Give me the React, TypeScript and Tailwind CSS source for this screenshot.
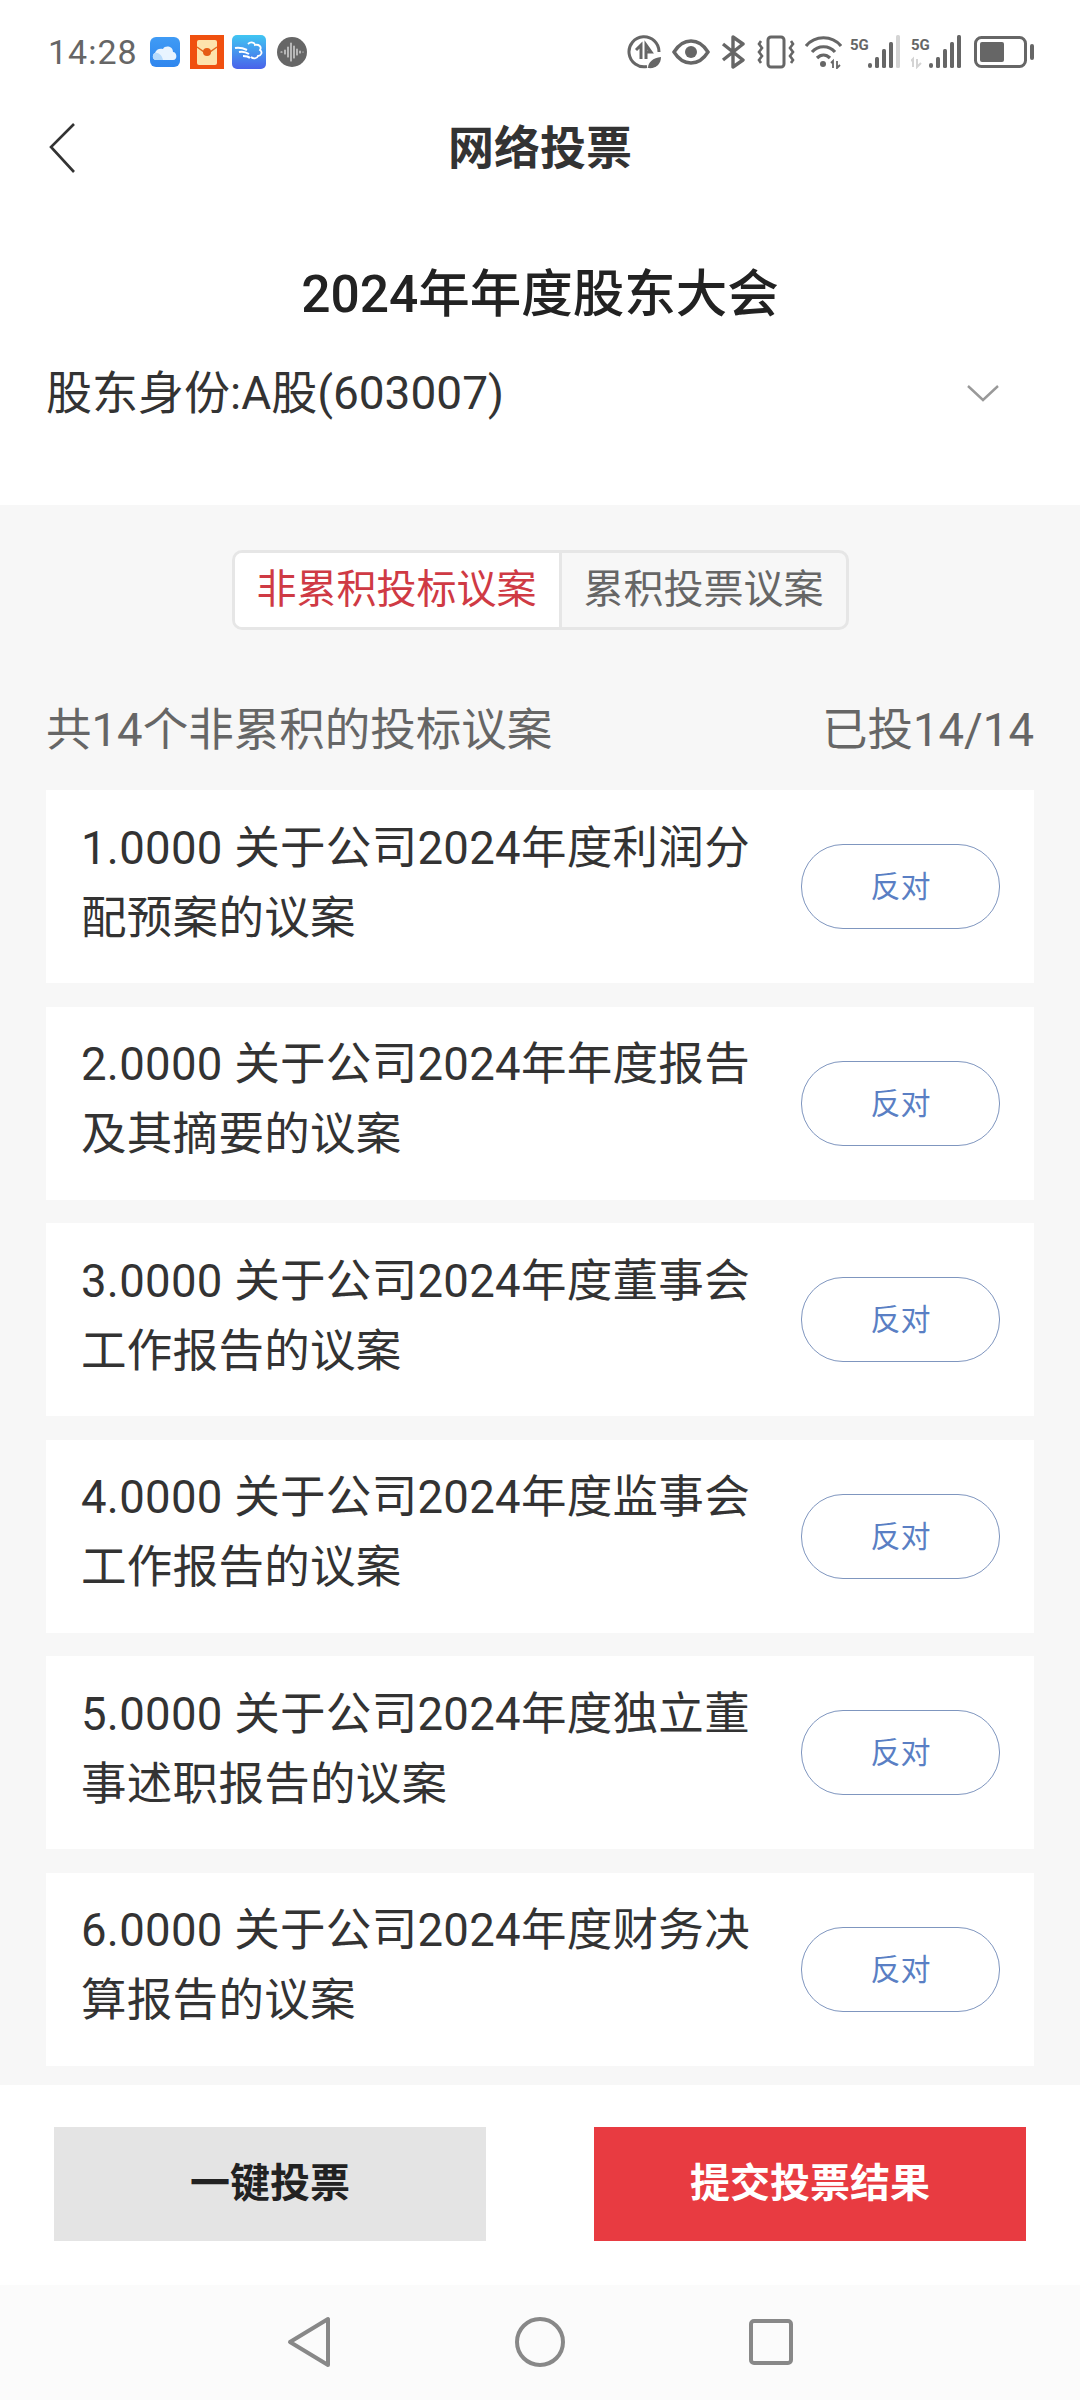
import * as React from 'react';

const proposals = [
  ['1.0000 关于公司2024年度利润分', '配预案的议案'],
  ['2.0000 关于公司2024年年度报告', '及其摘要的议案'],
  ['3.0000 关于公司2024年度董事会', '工作报告的议案'],
  ['4.0000 关于公司2024年度监事会', '工作报告的议案'],
  ['5.0000 关于公司2024年度独立董', '事述职报告的议案'],
  ['6.0000 关于公司2024年度财务决', '算报告的议案'],
];

function NotificationIcons() {
  return (
    <div className="ml-[12px] flex items-center">
      {/* cloud */}
      <svg width="30" height="30" viewBox="0 0 30 30">
        <defs>
          <linearGradient id="cloudBg" x1="0" y1="0" x2="0" y2="1">
            <stop offset="0" stopColor="#3f9bf5" />
            <stop offset="1" stopColor="#2f86ee" />
          </linearGradient>
        </defs>
        <rect width="30" height="30" rx="6" fill="url(#cloudBg)" />
        <path d="M6 23c-4 0-4-6-1-7 1-4 5-5 8-4 2-4 10-3 10 3 4 0 5 8 0 8z" fill="#e8f4ff" />
        <path d="M6 23c-4 0-4-6-1-7 3-1 7 2 8 7z" fill="#b5dafc" />
      </svg>
      {/* red packet */}
      <svg width="34" height="34" viewBox="0 0 34 34" className="ml-[10px]">
        <rect width="34" height="34" fill="#f0500f" />
        <rect x="7" y="5" width="20" height="25" rx="2" fill="#fde3ac" />
        <path d="M7 12l10 7 10-7" fill="none" stroke="#e0691f" strokeWidth="1.5" />
        <circle cx="17" cy="17" r="4" fill="#e55b14" />
      </svg>
      {/* flying cloud */}
      <svg width="34" height="34" viewBox="0 0 34 34" className="ml-[8px]">
        <defs>
          <linearGradient id="flyBg" x1="0" y1="0" x2="0" y2="1">
            <stop offset="0" stopColor="#40c6f2" />
            <stop offset="1" stopColor="#4a62ea" />
          </linearGradient>
        </defs>
        <rect width="34" height="34" rx="5" fill="url(#flyBg)" />
        <path d="M3 13c5-1 8 0 12 2M7 17c4-1 7 0 10 2M11 21c3 0 5 0 7 2" fill="none" stroke="#fff" strokeWidth="2" />
        <path d="M16 9c3-3 7-1 7 1 4-1 7 2 5 5 3 2 1 6-2 6-1 3-5 3-7 1" fill="none" stroke="#fff" strokeWidth="1.8" />
      </svg>
      {/* audio */}
      <svg width="30" height="30" viewBox="0 0 30 30" className="ml-[11px]">
        <circle cx="15" cy="15" r="15" fill="#666" />
        <path d="M4 15h1M8 13v4M11 10v10M14 6v18M17 9v12M20 12v6M23 14v2M26 15h0" stroke="#eee" strokeWidth="1.2" strokeLinecap="round" />
      </svg>
    </div>
  );
}

function SignalBars({ dimLast, dimData }: { dimLast?: boolean; dimData?: boolean }) {
  return (
    <svg width="51" height="34" viewBox="0 0 51 34">
      <text x="0" y="15" fontSize="15" fontWeight="700" fontFamily="Roboto, sans-serif" fill="#666">5G</text>
      {dimData && <path d="M2 32v-8l-2 2M6 24v8l4-4" fill="none" stroke="#d4d4d4" strokeWidth="2" />}
      <rect x="18" y="28" width="4" height="5" rx="2" fill="#666" />
      <rect x="25" y="22" width="4" height="11" rx="1.5" fill="#666" />
      <rect x="32" y="14" width="4" height="19" rx="1.5" fill="#666" />
      <rect x="39" y="7" width="4" height="26" rx="1.5" fill="#666" />
      <rect x="46" y="0" width="4" height="33" rx="1.5" fill={dimLast ? '#d4d4d4' : '#666'} />
    </svg>
  );
}

function SystemIcons() {
  return (
    <div className="flex items-center text-[#666]">
      {/* data saver */}
      <svg width="34" height="34" viewBox="0 0 34 34" fill="none">
        <path d="M20 31.5A15 15 0 1 1 32 17" stroke="#666" strokeWidth="3" />
        <path d="M14 24V10l-5 5M19 24V10l5 7h-5" stroke="#666" strokeWidth="3" />
        <path d="M21 33c0-6 5-10 13-11 0 7-5 12-13 11z" fill="#666" />
      </svg>
      {/* eye */}
      <svg width="38" height="26" viewBox="0 0 38 26" fill="none" className="ml-[11px]">
        <path d="M2 13C7 5 13 2 19 2s12 3 17 11c-5 8-11 11-17 11S7 21 2 13z" stroke="#666" strokeWidth="3.4" />
        <circle cx="19" cy="13" r="6" fill="#666" />
      </svg>
      {/* bluetooth */}
      <svg width="24" height="34" viewBox="0 0 24 34" fill="none" className="ml-[11px]">
        <path d="M2 9l20 16-10 7V2l10 7L2 25" stroke="#666" strokeWidth="3.4" strokeLinejoin="round" />
      </svg>
      {/* vibrate */}
      <svg width="38" height="34" viewBox="0 0 38 34" fill="none" className="ml-[12px]">
        <rect x="11" y="2" width="16" height="30" rx="3" stroke="#666" strokeWidth="3" />
        <path d="M4 6l-2 3 3 4-3 4 3 4-3 4 2 3M34 6l2 3-3 4 3 4-3 4 3 4-2 3" stroke="#666" strokeWidth="2.6" />
      </svg>
      {/* wifi */}
      <svg width="37" height="34" viewBox="0 0 37 34" fill="none" className="ml-[10px]">
        <path d="M1 11C10 0 27 0 36 11M7 17c6-7 17-7 23 0M12 23c4-4 9-4 13 0" stroke="#666" strokeWidth="3.2" />
        <circle cx="18" cy="29" r="3" fill="#666" />
        <path d="M28 33v-7l-2 2M32 26v7l3-3" stroke="#666" strokeWidth="1.8" />
      </svg>
      <div className="ml-[8px] flex items-center">
        <SignalBars dimLast />
      </div>
      <div className="ml-[10px] flex items-center">
        <SignalBars dimData />
      </div>
      {/* battery */}
      <svg width="60" height="32" viewBox="0 0 60 32" fill="none" className="ml-[12px]">
        <rect x="1.5" y="1.5" width="50" height="29" rx="6" stroke="#666" strokeWidth="3" />
        <rect x="6" y="6" width="24" height="20" rx="2" fill="#666" />
        <rect x="56" y="8" width="4" height="16" rx="2" fill="#666" />
      </svg>
    </div>
  );
}

export default function App() {
  return (
    <div
      className="flex h-[2400px] w-[1080px] flex-col overflow-hidden bg-white text-[#333]"
      style={{ fontFamily: 'Roboto, "Noto Sans CJK SC", sans-serif' }}
    >
      <div className="flex h-[104px] shrink-0 items-center justify-between pl-[48px] pr-[46px]">
        <div className="flex items-center">
          <span className="text-[34px] leading-[40px] tracking-[1px] text-[#666]">14:28</span>
          <NotificationIcons />
        </div>
        <SystemIcons />
      </div>

      <div className="relative flex h-[88px] shrink-0 items-center justify-center">
        <svg width="28" height="52" viewBox="0 0 28 52" fill="none" className="absolute left-[49px] top-[18px]">
          <path d="M25 2L2 25l23 25" stroke="#333" strokeWidth="2.6" />
        </svg>
        <h1 className="text-[46px] font-bold leading-[60px] text-[#333]">网络投票</h1>
      </div>

      <div className="mt-[67px] flex h-[72px] shrink-0 items-center justify-center">
        <h2 className="text-[51.5px] font-medium leading-[72px] text-[#222]">2024年年度股东大会</h2>
      </div>

      <div className="mt-[32px] flex h-[60px] shrink-0 items-center justify-between pl-[46px] pr-[80px]">
        <span className="text-[46px] leading-[60px] text-[#333]">股东身份:A股(603007)</span>
        <svg width="34" height="20" viewBox="0 0 34 20" fill="none">
          <path d="M2 3l15 14L32 3" stroke="#999" strokeWidth="2.4" />
        </svg>
      </div>

      <div className="mt-[82px] flex min-h-0 flex-1 flex-col overflow-hidden bg-[#f7f7f7] px-[46px]">
        <div className="mt-[45px] flex shrink-0 justify-center">
          <div className="flex h-[80px] w-[617px] overflow-hidden rounded-[10px] border-[3px] border-[#e6e6e6]">
            <div className="flex w-[327px] items-center justify-center border-r-[3px] border-[#e6e6e6] bg-white text-[40px] text-[#cf3a44]">
              非累积投标议案
            </div>
            <div className="flex flex-1 items-center justify-center text-[40px] text-[#666]">
              累积投票议案
            </div>
          </div>
        </div>

        <div className="mt-[71px] flex h-[60px] shrink-0 items-center justify-between text-[45.5px] text-[#666]">
          <span>共14个非累积的投标议案</span>
          <span>已投14/14</span>
        </div>

        <div className="mt-[29px] flex flex-col gap-[23.5px]">
          {proposals.map((lines) => (
            <div key={lines[0]} className="flex h-[193px] shrink-0 items-center justify-between bg-white pl-[35px] pr-[34px]">
              <div className="pb-[6px] text-[45.5px] leading-[70px] tracking-[0.3px] text-[#333]">
                <div>{lines[0]}</div>
                <div>{lines[1]}</div>
              </div>
              <div className="flex h-[85px] w-[199px] shrink-0 items-center justify-center rounded-[42px] border border-[#7f96bf] text-[30px] text-[#5a7fc4]">
                反对
              </div>
            </div>
          ))}
        </div>
      </div>

      <div className="flex h-[200px] shrink-0 items-center justify-between bg-white px-[54px] pb-[3px]">
        <div className="flex h-[114px] w-[432px] items-center justify-center bg-[#e4e4e4] text-[40px] font-bold text-[#222]">
          一键投票
        </div>
        <div className="flex h-[114px] w-[432px] items-center justify-center bg-[#e83b41] text-[40px] font-bold text-white">
          提交投票结果
        </div>
      </div>

      <div className="flex h-[115px] shrink-0 items-center justify-center gap-[184px] bg-[#fbfbfb] pb-[2px]">
        <svg width="44" height="52" viewBox="0 0 44 52" fill="none">
          <path d="M41 3v46L3 26z" stroke="#888" strokeWidth="4" strokeLinejoin="round" />
        </svg>
        <svg width="50" height="50" viewBox="0 0 50 50" fill="none">
          <circle cx="25" cy="25" r="23" stroke="#888" strokeWidth="4" />
        </svg>
        <svg width="44" height="46" viewBox="0 0 44 46" fill="none">
          <rect x="2" y="2" width="40" height="42" rx="3" stroke="#888" strokeWidth="4" />
        </svg>
      </div>
    </div>
  );
}
